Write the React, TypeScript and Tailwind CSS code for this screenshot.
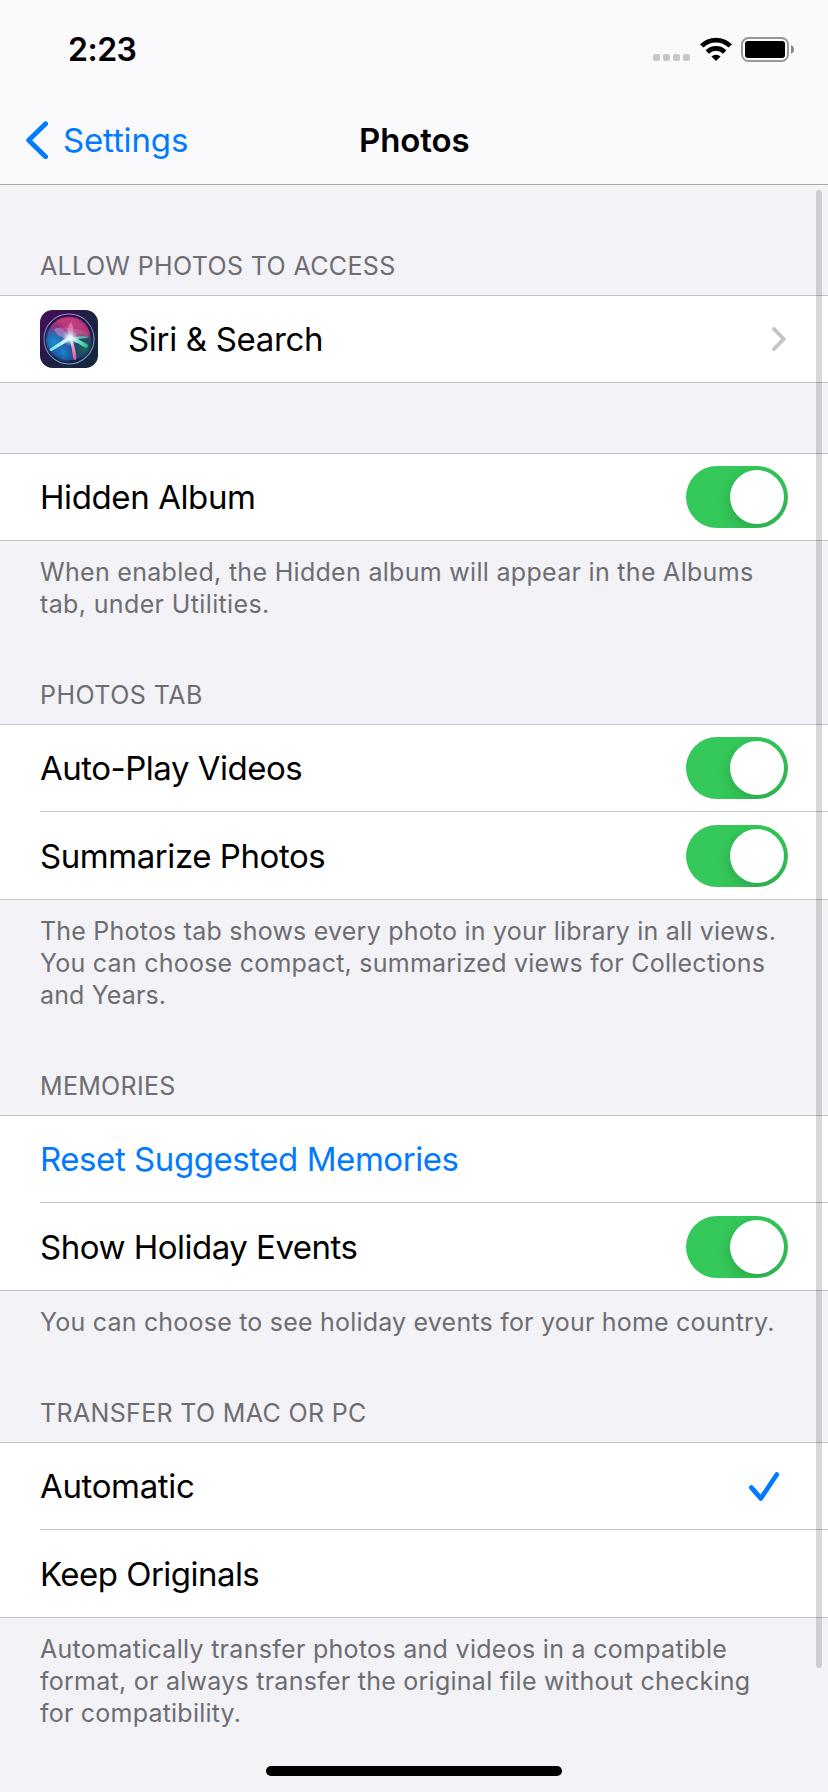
import type { ReactNode } from "react";

function WifiIcon() {
  return (
    <svg className="ml-[10px] h-6 w-8 shrink-0" viewBox="0 0 32 24">
      <g fill="none" stroke="#000" strokeWidth="4.8">
        <path d="M1.7 8.9A20.4 20.4 0 0 1 30.3 8.9" />
        <path d="M7.3 15A12.4 12.4 0 0 1 24.7 15" />
      </g>
      <path d="M16 24 L11.4 19.6 A6.6 6.6 0 0 1 20.6 19.6 Z" fill="#000" />
    </svg>
  );
}

function BatteryIcon() {
  return (
    <svg className="ml-[9px] h-[25px] w-[54px] shrink-0" viewBox="0 0 54 25">
      <rect x="1" y="1" width="46" height="23" rx="6.5" fill="none" stroke="#97979a" strokeWidth="2" />
      <rect x="4" y="4" width="40" height="17" rx="3" fill="#000" />
      <path d="M50 8 C51.8 8.7 53 10.4 53 12.5 C53 14.6 51.8 16.3 50 17 Z" fill="#858588" />
    </svg>
  );
}

function StatusBar() {
  return (
    <div className="flex h-[99px] items-center pr-[33px] pl-[68px]">
      <span className="text-[32px] leading-8 font-semibold tracking-[-0.5px]">2:23</span>
      <div className="ml-auto flex h-[25px] items-start">
        <div className="flex h-6 items-end gap-[3px]">
          <i className="size-[7px] rounded-[2px] bg-[#c7c7c9]" />
          <i className="size-[7px] rounded-[2px] bg-[#c7c7c9]" />
          <i className="size-[7px] rounded-[2px] bg-[#c7c7c9]" />
          <i className="size-[7px] rounded-[2px] bg-[#c7c7c9]" />
        </div>
        <WifiIcon />
        <BatteryIcon />
      </div>
    </div>
  );
}

function NavBar() {
  return (
    <div className="mb-[3px] grid h-[82px] grid-cols-[359px_1fr] items-center">
      <div className="flex items-center pl-[26px] text-[#007aff]">
        <svg className="h-[38px] w-[22px]" viewBox="0 0 22 38">
          <path d="M19.6 2.7 L2.7 19.2 L19.6 35.7" fill="none" stroke="currentColor" strokeWidth="4.8" strokeLinecap="round" strokeLinejoin="round" />
        </svg>
        <span className="ml-[15px] text-[33px] leading-10 tracking-[-0.15px]">Settings</span>
      </div>
      <h1 className="text-[33px] leading-10 font-semibold tracking-[-0.08px]">Photos</h1>
    </div>
  );
}

function SiriIcon() {
  return (
    <svg className="mr-[30px] size-[58px] shrink-0" viewBox="0 0 58 58">
      <defs>
        <linearGradient id="tile" x1="0" y1="0" x2="1" y2="0.9">
          <stop offset="0" stopColor="#470f5c" />
          <stop offset="0.3" stopColor="#33124f" />
          <stop offset="0.55" stopColor="#1b2342" />
          <stop offset="1" stopColor="#14253f" />
        </linearGradient>
        <linearGradient id="orb" x1="0.6" y1="0" x2="0.4" y2="1">
          <stop offset="0" stopColor="#c2307e" />
          <stop offset="0.35" stopColor="#8d3377" />
          <stop offset="0.52" stopColor="#35508a" />
          <stop offset="1" stopColor="#154a8c" />
        </linearGradient>
        <linearGradient id="ring" x1="0" y1="0" x2="0.3" y2="1">
          <stop offset="0" stopColor="#b98ac6" />
          <stop offset="0.5" stopColor="#7a78a8" />
          <stop offset="1" stopColor="#78a5bf" />
        </linearGradient>
        <radialGradient id="blue">
          <stop offset="0" stopColor="#1b93d8" />
          <stop offset="1" stopColor="#1c6ec8" stopOpacity="0" />
        </radialGradient>
        <radialGradient id="teal">
          <stop offset="0" stopColor="#17695f" />
          <stop offset="0.5" stopColor="#1a4a58" stopOpacity="0.8" />
          <stop offset="1" stopColor="#123d55" stopOpacity="0" />
        </radialGradient>
        <radialGradient id="glow">
          <stop offset="0" stopColor="#fff" />
          <stop offset="0.35" stopColor="#e4faff" stopOpacity="0.75" />
          <stop offset="1" stopColor="#9fd8ff" stopOpacity="0" />
        </radialGradient>
        <linearGradient id="pinkRay" x1="0" y1="0" x2="0" y2="1">
          <stop offset="0" stopColor="#fff" />
          <stop offset="0.5" stopColor="#e58cc6" />
          <stop offset="1" stopColor="#e0508f" />
        </linearGradient>
        <linearGradient id="greenRay" x1="0" y1="0" x2="1" y2="0">
          <stop offset="0" stopColor="#f2ffff" />
          <stop offset="0.5" stopColor="#6fe3c4" />
          <stop offset="1" stopColor="#2cb583" />
        </linearGradient>
        <linearGradient id="cyanRay" x1="1" y1="0" x2="0" y2="1">
          <stop offset="0" stopColor="#fff" />
          <stop offset="1" stopColor="#6fe6ee" />
        </linearGradient>
        <clipPath id="disc">
          <circle cx="29" cy="29" r="23.5" />
        </clipPath>
      </defs>
      <rect width="58" height="58" rx="12.5" fill="url(#tile)" />
      <circle cx="29" cy="29" r="24.5" fill="#201a49" />
      <g clipPath="url(#disc)">
        <circle cx="29" cy="28.5" r="21.8" fill="url(#orb)" />
        <circle cx="14" cy="32" r="17" fill="url(#blue)" />
        <circle cx="24" cy="43" r="12" fill="url(#blue)" opacity="0.8" />
        <circle cx="44" cy="38" r="15" fill="url(#teal)" />
        <path d="M17 11 C28 4 46 11 49 25 C43 22 36 24 30 28 C28 20 23 16 17 11Z" fill="#e0457e" opacity="0.4" />
        <path d="M14 19 C20 16 40 17 49 25 C42 29 34 28 29 28 C23 27 16 25 14 19Z" fill="#e88bb8" opacity="0.3" />
        <path d="M31 12 C34 16 34 24 31 29 C27 25 26 18 31 12Z" fill="#e9a0d0" opacity="0.6" />
        <path d="M14 19 C20 16 27 21 29 28 C22 29 16 26 14 19Z" fill="#b695dd" opacity="0.4" />
        <path d="M28.5 26.5 L31 29.5 L11.5 41 C9.5 41.5 9 39.8 10.5 38.5Z" fill="url(#cyanRay)" />
        <path d="M30 27.2 C37 26.5 43 26.2 49 26.2 C48 28.6 40 29 31 29Z" fill="url(#greenRay)" opacity="0.8" />
        <path d="M31 27 C38 28.5 44 32 47.5 34.5 C49 38 46 38.5 43 36.5 C40 34.5 35 31.5 30 29.5Z" fill="url(#greenRay)" />
        <path d="M28.5 27 L31.5 28 C34 34 36.5 43 36.2 48.5 C36 51.5 34 50.5 33 47.5 C32 41 31.5 34 28.5 27Z" fill="url(#pinkRay)" />
      </g>
      <circle cx="30" cy="27.8" r="8.5" fill="url(#glow)" />
      <circle cx="29" cy="29" r="25" fill="none" stroke="url(#ring)" strokeWidth="1.1" />
    </svg>
  );
}

function Toggle() {
  return (
    <span role="switch" aria-checked="true" className="ml-auto flex h-[62px] w-[102px] shrink-0 items-center justify-end overflow-hidden rounded-full bg-[#34c759] p-1">
      <span className="size-[54px] rounded-full bg-white shadow-[0_5px_14px_rgba(0,0,0,0.17)]" />
    </span>
  );
}

function Chevron() {
  return (
    <svg className="mr-[2px] ml-auto h-6 w-[14px]" viewBox="0 0 14 24">
      <path d="M2 2 L11.8 12 L2 22" fill="none" stroke="#c4c4c6" strokeWidth="3.9" strokeLinecap="round" strokeLinejoin="round" />
    </svg>
  );
}

function Check() {
  return (
    <svg className="mr-[9px] ml-auto h-[29px] w-[30px]" viewBox="0 0 30 29">
      <path d="M2.4 15.6 L11.8 26.4 L27.8 2.5" fill="none" stroke="#007aff" strokeWidth="4.7" strokeLinecap="round" strokeLinejoin="round" />
    </svg>
  );
}

function Group({ children }: { children: ReactNode }) {
  return <div className="border-y border-[#c4c4c7] bg-white">{children}</div>;
}

function Row({ children }: { children: ReactNode }) {
  return <div className="flex h-[86px] items-center px-10 text-[33px] leading-10 whitespace-nowrap">{children}</div>;
}

function LastRow({ children }: { children: ReactNode }) {
  return (
    <div className="pl-10">
      <div className="flex h-[88px] items-center border-t border-[#c4c4c7] pr-10 text-[33px] leading-10 whitespace-nowrap">{children}</div>
    </div>
  );
}

function Heading({ children }: { children: ReactNode }) {
  return <h2 className="px-10 pb-[13px] text-[25px] leading-8 text-[#6d6d72]">{children}</h2>;
}

function Note({ children }: { children: ReactNode }) {
  return <p className="flex flex-col px-10 pt-[15px] text-[25px] leading-8 whitespace-nowrap text-[#6d6d72]">{children}</p>;
}

export default function App() {
  return (
    <div className="relative h-[1792px] w-[828px] overflow-hidden bg-[#f2f2f7] font-[Inter,sans-serif] text-black">
      <header className="border-b border-[#a7a7aa] bg-[#fafafd]">
        <StatusBar />
        <NavBar />
      </header>

      <main>
        <section className="pt-[65px]">
          <Heading><span className="tracking-[0.36px]">ALLOW PHOTOS TO ACCESS</span></Heading>
          <Group>
            <Row>
              <SiriIcon />
              <span className="tracking-[-0.32px]">Siri &amp; Search</span>
              <Chevron />
            </Row>
          </Group>
        </section>

        <section className="pt-[70px]">
          <Group>
            <Row><span className="tracking-[-0.4px]">Hidden Album</span><Toggle /></Row>
          </Group>
          <Note>
            <span className="tracking-[0.302px]">When enabled, the Hidden album will appear in the Albums</span>
            <span className="tracking-[0.365px]">tab, under Utilities.</span>
          </Note>
        </section>

        <section className="pt-[59px]">
          <Heading><span className="tracking-[0.48px]">PHOTOS TAB</span></Heading>
          <Group>
            <Row><span className="tracking-[-0.49px]">Auto-Play Videos</span><Toggle /></Row>
            <LastRow><span className="tracking-[-0.44px]">Summarize Photos</span><Toggle /></LastRow>
          </Group>
          <Note>
            <span className="tracking-[0.212px]">The Photos tab shows every photo in your library in all views.</span>
            <span className="tracking-[0.24px]">You can choose compact, summarized views for Collections</span>
            <span className="tracking-[0.13px]">and Years.</span>
          </Note>
        </section>

        <section className="pt-[59px]">
          <Heading><span className="tracking-[0.309px]">MEMORIES</span></Heading>
          <Group>
            <Row><span className="tracking-[-0.44px] text-[#007aff]">Reset Suggested Memories</span></Row>
            <LastRow><span className="tracking-[-0.5px]">Show Holiday Events</span><Toggle /></LastRow>
          </Group>
          <Note>
            <span className="tracking-[0.207px]">You can choose to see holiday events for your home country.</span>
          </Note>
        </section>

        <section className="pt-[59px]">
          <Heading><span className="tracking-[0.337px]">TRANSFER TO MAC OR PC</span></Heading>
          <Group>
            <Row><span className="tracking-[-0.36px]">Automatic</span><Check /></Row>
            <LastRow><span className="tracking-[-0.53px]">Keep Originals</span></LastRow>
          </Group>
          <Note>
            <span className="tracking-[0.295px]">Automatically transfer photos and videos in a compatible</span>
            <span className="tracking-[0.258px]">format, or always transfer the original file without checking</span>
            <span className="tracking-[0.22px]">for compatibility.</span>
          </Note>
        </section>
      </main>

      <div className="absolute top-[190px] right-[6px] h-[1478px] w-[6px] rounded-full bg-black/15" />
      <div className="absolute bottom-[16px] left-[266px] h-[10px] w-[296px] rounded-full bg-black" />
    </div>
  );
}
